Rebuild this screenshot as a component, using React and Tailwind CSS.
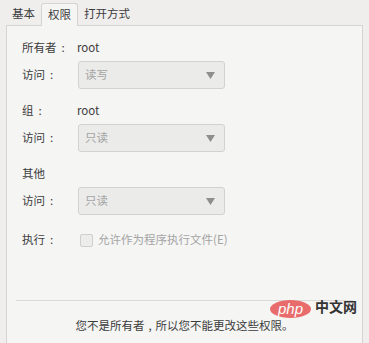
function Label({ text, w }) {
  return (
    <span className={`flex items-center ${w}`}>
      {text}
      <span className="ml-[5px]">:</span>
    </span>
  );
}

export default function App() {
  const rows = [
    { label: "所有者", colon: true, value: "root", access: "读写" },
    { label: "组", colon: true, value: "root", access: "只读" },
    { label: "其他", colon: false, value: null, access: "只读" },
  ];

  return (
    <div
      className="w-[369px] h-[343px] bg-[#efeeed] text-[#3c3c3c] text-[11.5px] overflow-hidden relative"
      style={{ fontFamily: '"Noto Sans CJK SC", "Noto Sans", sans-serif' }}
    >
      {/* Tabs */}
      <div className="flex h-[25px] pl-[6px] items-end">
        <div className="px-[6px] h-[22px] flex items-center">基本</div>
        <div className="px-[6px] h-[23px] flex items-center bg-[#f5f5f4] border border-b-0 border-[#d6d4d1] rounded-t-[3px] -mb-px relative z-10">
          权限
        </div>
        <div className="px-[6px] h-[22px] flex items-center">打开方式</div>
      </div>

      {/* Panel */}
      <div className="mx-[6px] h-[318px] bg-[#f5f5f4] border border-b-0 border-[#d6d4d1] flex flex-col">
        <div className="pl-[15px] pt-[12px] flex flex-col">
          {rows.map((r, i) => (
            <div key={i} className={i > 0 ? "mt-[12px]" : ""}>
              <div className="flex items-center h-[20px]">
                {r.colon ? (
                  <Label text={r.label} w="w-[55px]" />
                ) : (
                  <span className="w-[55px]">{r.label}</span>
                )}
                {r.value && <span>{r.value}</span>}
              </div>
              <div className="flex items-center mt-[3px]">
                <Label text="访问" w="w-[56px]" />
                <div className="w-[147px] h-[28px] rounded-[3px] border border-[#d3d2d0] bg-[#ebebea] flex items-center justify-between pl-[6px] pr-[9px] text-[#a4a4a4]">
                  <span>{r.access}</span>
                  <svg width="9" height="7" viewBox="0 0 9 7">
                    <path d="M0 0 L9 0 L4.5 7 Z" fill="#8e8e8e" />
                  </svg>
                </div>
              </div>
            </div>
          ))}
          <div className="flex items-center mt-[16px] h-[18px]">
            <Label text="执行" w="w-[58px]" />
            <span className="w-[13px] h-[13px] rounded-[2px] border border-[#d0cfcd] bg-[#ececeb]" />
            <span className="ml-[5px] text-[#a4a4a4]">允许作为程序执行文件(E)</span>
          </div>
        </div>
        <div className="mt-auto mx-[9px] border-t border-[#dcdad8]" />
        <div className="h-[42px] flex items-start justify-center pt-[16px] leading-[17px]">
          您不是所有者<span className="mx-[4px]">,</span>所以您不能更改这些权限。
        </div>
      </div>

      {/* watermark */}
      <div className="absolute left-[270px] top-[296px] flex items-start gap-[4px]">
        <div className="mt-[4px] w-[41px] h-[18px] rounded-[50%] bg-[#e96c6c] flex items-center justify-center">
          <span
            className="text-white italic text-[15px] leading-none -mt-[2px]"
            style={{ fontFamily: '"Liberation Sans", sans-serif' }}
          >
            php
          </span>
        </div>
        <span className="text-[14px] leading-[20px] text-[#333] font-bold">中文网</span>
      </div>
    </div>
  );
}
